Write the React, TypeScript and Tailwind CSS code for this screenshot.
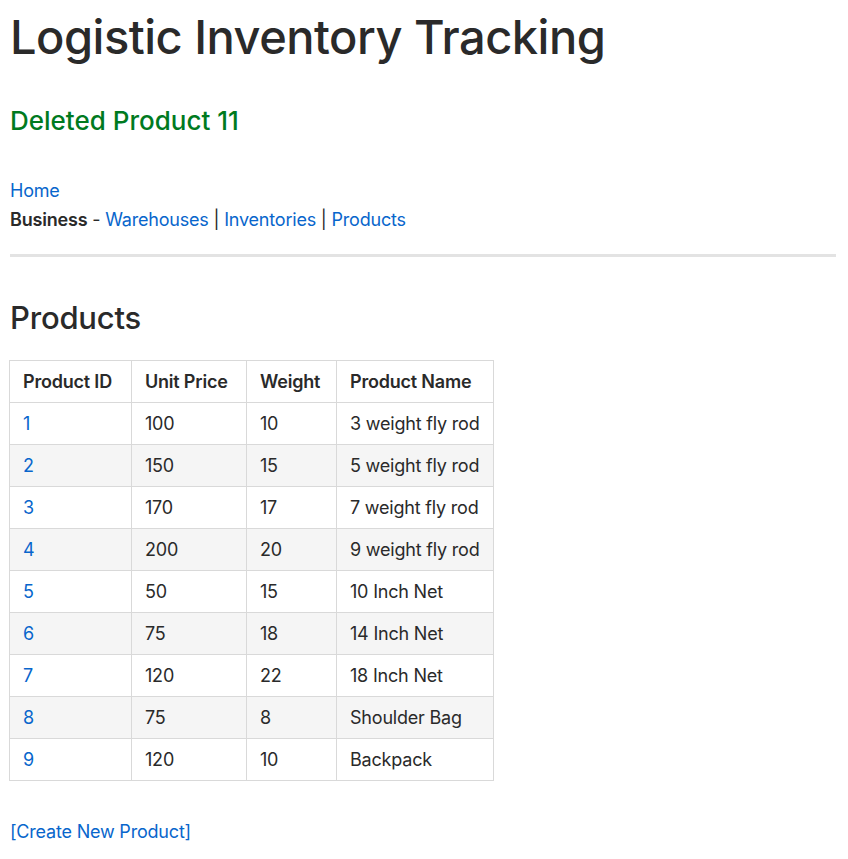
import React from "react";

const rows = [
  [1, 100, 10, "3 weight fly rod"],
  [2, 150, 15, "5 weight fly rod"],
  [3, 170, 17, "7 weight fly rod"],
  [4, 200, 20, "9 weight fly rod"],
  [5, 50, 15, "10 Inch Net"],
  [6, 75, 18, "14 Inch Net"],
  [7, 120, 22, "18 Inch Net"],
  [8, 75, 8, "Shoulder Bag"],
  [9, 120, 10, "Backpack"],
];

export default function App() {
  return (
    <div className="min-h-screen bg-white px-[10px] pb-4 text-[18px] leading-[29px] tracking-[-0.2px] text-[#2a2a2a]" style={{ fontFamily: "Inter, 'Noto Sans', sans-serif" }}>
      <h1 className="pt-[7px] text-[47px] leading-[60px] font-medium tracking-[-0.5px]">Logistic Inventory Tracking</h1>
      <h3 className="mt-[38px] text-[26px] leading-[32px] font-medium tracking-[0px] text-[#007a1f]">Deleted Product 11</h3>
      <div className="mt-[39px]">
        <a className="text-[#0866cc]" href="#">Home</a>
      </div>
      <div>
        <span className="font-semibold">Business</span> -{" "}
        <a className="text-[#0866cc]" href="#">Warehouses</a> |{" "}
        <a className="text-[#0866cc]" href="#">Inventories</a> |{" "}
        <a className="text-[#0866cc]" href="#">Products</a>
      </div>
      <hr className="mt-[20px] mr-[2px] h-[3px] border-0 bg-[#e3e3e3]" />
      <h2 className="mt-[42px] text-[31px] leading-[38px] font-medium">Products</h2>
      <table className="mt-[23px] -ml-[1px] table-fixed border-collapse border border-[#d9d9d9] whitespace-nowrap">
        <thead>
          <tr className="h-[42px]">
            <th className="w-[122px] border border-[#d9d9d9] px-[13px] text-left font-semibold">Product ID</th>
            <th className="w-[115px] border border-[#d9d9d9] px-[13px] text-left font-semibold">Unit Price</th>
            <th className="w-[90px] border border-[#d9d9d9] px-[13px] text-left font-semibold">Weight</th>
            <th className="w-[157px] border border-[#d9d9d9] px-[13px] text-left font-semibold">Product Name</th>
          </tr>
        </thead>
        <tbody>
          {rows.map((r, i) => (
            <tr key={i} className={`h-[42px] ${i % 2 === 1 ? "bg-[#f5f5f5]" : "bg-white"}`}>
              <td className="border border-[#d9d9d9] px-[13px]">
                <a className="text-[#0866cc]" href="#">{r[0]}</a>
              </td>
              <td className="border border-[#d9d9d9] px-[13px]">{r[1]}</td>
              <td className="border border-[#d9d9d9] px-[13px]">{r[2]}</td>
              <td className="border border-[#d9d9d9] px-[13px]">{r[3]}</td>
            </tr>
          ))}
        </tbody>
      </table>
      <div className="mt-[36px]">
        <a className="text-[#0866cc]" href="#">[Create New Product]</a>
      </div>
    </div>
  );
}
